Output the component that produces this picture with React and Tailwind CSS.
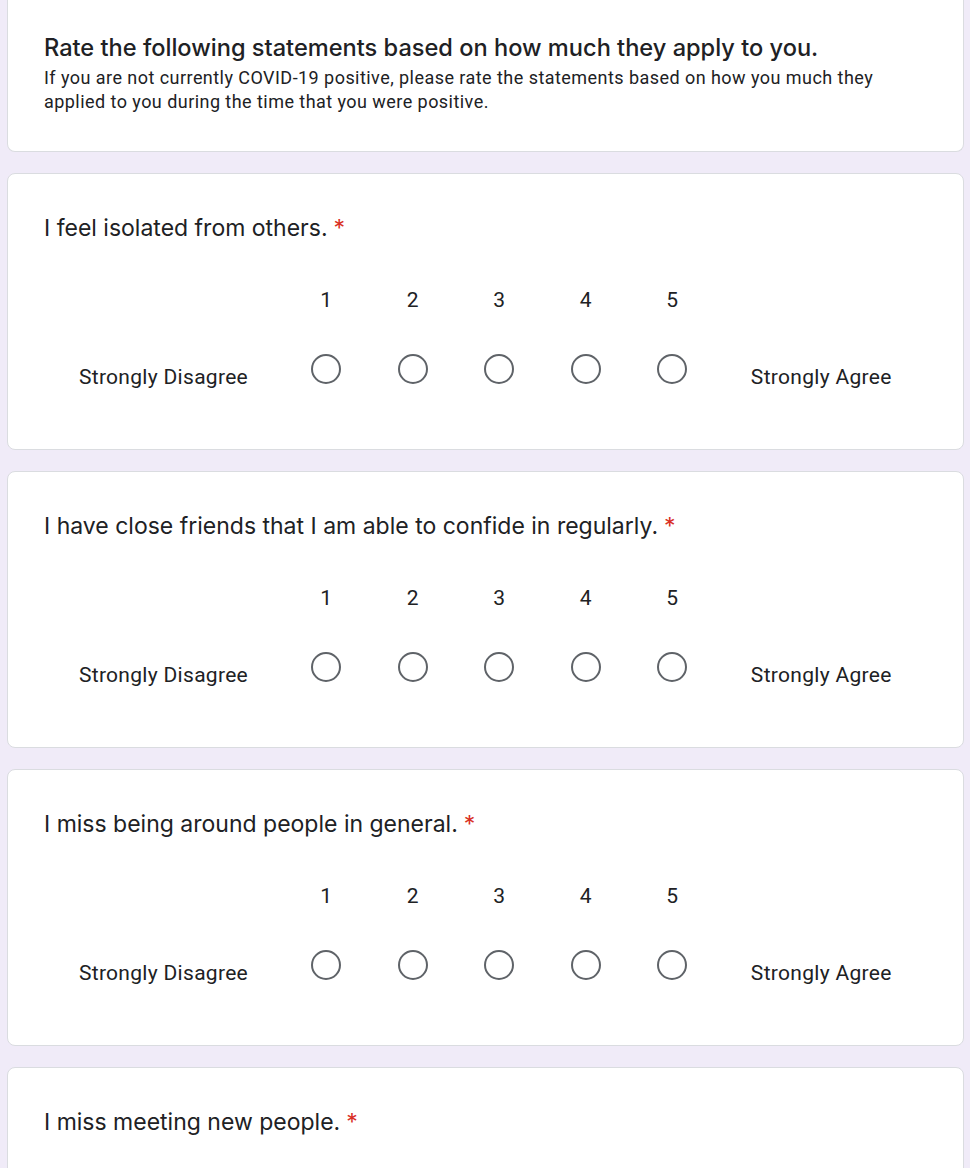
const questions = [
  "I feel isolated from others.",
  "I have close friends that I am able to confide in regularly.",
  "I miss being around people in general.",
  "I miss meeting new people.",
];

const heading = { fontFamily: "Inter, 'Open Sans', sans-serif" };
const body = { fontFamily: "Roboto, 'Liberation Sans', sans-serif" };

function Radio() {
  return (
    <span className="block w-[30px] h-[30px] rounded-full border-2 border-[#5f6368]" />
  );
}

function Question({ text, last }) {
  return (
    <div
      className={
        "bg-white border border-[#dadce0] rounded-lg px-9 pt-[38px] " +
        (last ? "pb-[80px]" : "pb-[60px]")
      }
    >
      <div className="text-[23px] leading-8 text-[#202124]" style={heading}>
        {text}
        <span className="text-[#d93025] ml-1.5">*</span>
      </div>
      {!last && (
        <div className="mt-[44px] text-[21px] tracking-[0.3px] text-[#202124]" style={body}>
          <div className="flex">
            <div className="w-[239px]" />
            {[1, 2, 3, 4, 5].map((n) => (
              <div key={n} className="w-[86.5px] text-center leading-6">
                {n}
              </div>
            ))}
          </div>
          <div className="flex items-start mt-[42px] h-[35px]">
            <div className="w-[239px] text-center leading-6 pt-[11px]">Strongly Disagree</div>
            {[1, 2, 3, 4, 5].map((n) => (
              <div key={n} className="w-[86.5px] flex justify-center">
                <Radio />
              </div>
            ))}
            <div className="flex-1 text-center leading-6 pt-[11px]">Strongly Agree</div>
          </div>
        </div>
      )}
    </div>
  );
}

export default function App() {
  return (
    <div className="bg-[#f0ebf8] pl-[7px] pr-[6px] overflow-hidden h-[1168px]">
      <div className="flex flex-col gap-[21px]">
        <div className="bg-white border border-t-0 border-[#dadce0] rounded-b-lg px-9 pt-[32px] pb-[37px]">
          <h1 className="text-[23.6px] leading-8 font-medium text-[#202124]" style={heading}>
            Rate the following statements based on how much they apply to you.
          </h1>
          <p className="mt-[2px] text-[18px] tracking-[0.45px] leading-6 text-[#202124] pr-10" style={body}>
            If you are not currently COVID-19 positive, please rate the statements based on how you much they applied to you during the time that you were positive.
          </p>
        </div>
        {questions.map((q, i) => (
          <Question key={q} text={q} last={i === questions.length - 1} />
        ))}
      </div>
    </div>
  );
}
